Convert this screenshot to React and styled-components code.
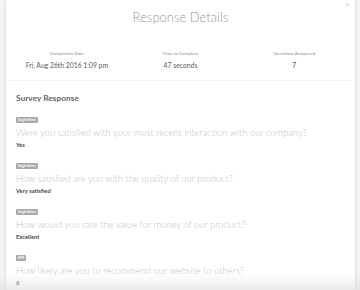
import styled, { createGlobalStyle } from "styled-components";

const GlobalStyle = createGlobalStyle`
  html, body {
    margin: 0;
    padding: 0;
    background: #f4f4f4;
    font-family: Lato, "Open Sans", sans-serif;
  }
  #root {
    height: 290px;
    overflow: hidden;
    position: relative;
  }
`;

const Modal = styled.div`
  position: relative;
  margin: 0 5px 0 6px;
  height: 300px;
  background: #fff;
  box-shadow: 0 0 3px rgba(0, 0, 0, 0.18);
`;

const Close = styled.span`
  position: absolute;
  top: 0;
  right: 5px;
  font-size: 8px;
  line-height: 9px;
  color: #c8c8c8;
`;

const Title = styled.h1`
  margin: 0;
  padding-top: 9px;
  font-size: 13px;
  line-height: 16px;
  font-weight: 300;
  color: #9a9a9a;
  text-align: center;
`;

const Stats = styled.div`
  display: grid;
  grid-template-columns: repeat(3, 1fr);
  margin: 24px 4px 0 4px;
  padding-bottom: 10px;
  border-bottom: 1px solid #f1f1f1;
`;

const Stat = styled.div`
  display: flex;
  flex-direction: column;
  align-items: center;
  gap: 3px;
`;

const StatLabel = styled.span`
  font-size: 4.6px;
  line-height: 8px;
  color: #8a8a8a;
`;

const StatValue = styled.span`
  font-size: 6.8px;
  line-height: 10px;
  font-weight: 400;
  color: #5c5c5c;
`;

const Section = styled.div`
  padding: 11px 10px 0 10px;
`;

const SectionTitle = styled.h2`
  margin: 0 0 13px 0;
  font-size: 8.4px;
  line-height: 12px;
  font-weight: 700;
  color: #666;
`;

const Item = styled.div`
  display: flex;
  flex-direction: column;
  align-items: flex-start;
  margin-bottom: 14px;
`;

const Badge = styled.span`
  display: block;
  height: 6px;
  padding: 0 2px;
  border-radius: 1px;
  background: #a9a9a9;
  color: #fff;
  font-size: 3.2px;
  line-height: 6px;
  font-weight: 700;
`;

const Question = styled.div`
  margin-top: 4px;
  font-size: 9.4px;
  line-height: 12px;
  font-weight: 300;
  color: #c4c4c4;
  white-space: nowrap;
`;

const Answer = styled.div`
  margin-top: 2px;
  font-size: 5.8px;
  line-height: 8px;
  font-weight: 700;
  color: #4a4a4a;
`;

const BottomFade = styled.div`
  position: absolute;
  left: 0;
  right: 0;
  bottom: 0;
  height: 16px;
  background: linear-gradient(to bottom, rgba(235, 235, 235, 0), rgba(225, 225, 225, 0.7));
  pointer-events: none;
`;

const stats = [
  { label: "Completion Date", value: "Fri, Aug 26th 2016 1:09 pm" },
  { label: "Time to Complete", value: "47 seconds" },
  { label: "Questions Answered", value: "7" },
];

const responses = [
  {
    type: "Single Select",
    question: "Were you satisfied with your most recent interaction with our company?",
    answer: "Yes",
  },
  {
    type: "Single Select",
    question: "How satisfied are you with the quality of our product?",
    answer: "Very satisfied",
  },
  {
    type: "Single Select",
    question: "How would you rate the value for money of our product?",
    answer: "Excellent",
  },
  {
    type: "NPS",
    question: "How likely are you to recommend our website to others?",
    answer: "6",
  },
];

export default function App() {
  return (
    <>
      <GlobalStyle />
      <Modal>
        <Close>×</Close>
        <Title>Response Details</Title>
        <Stats>
          {stats.map((s) => (
            <Stat key={s.label}>
              <StatLabel>{s.label}</StatLabel>
              <StatValue>{s.value}</StatValue>
            </Stat>
          ))}
        </Stats>
        <Section>
          <SectionTitle>Survey Response</SectionTitle>
          {responses.map((r) => (
            <Item key={r.question}>
              <Badge>{r.type}</Badge>
              <Question>{r.question}</Question>
              <Answer>{r.answer}</Answer>
            </Item>
          ))}
        </Section>
      </Modal>
      <BottomFade />
    </>
  );
}
